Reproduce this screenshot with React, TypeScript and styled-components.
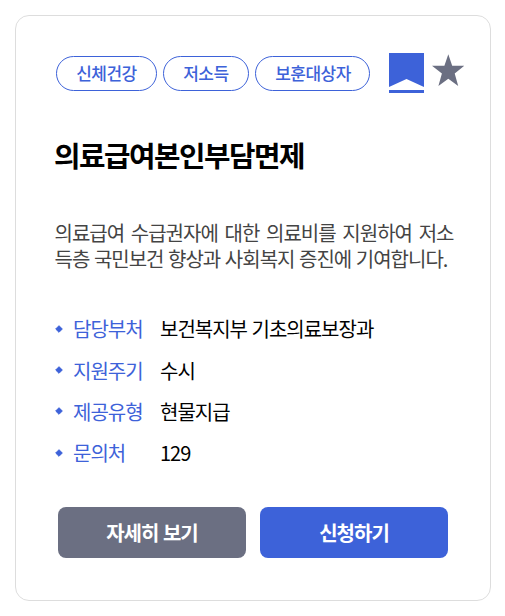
import React from "react";
import styled, { createGlobalStyle } from "styled-components";

const Global = createGlobalStyle`
  * { box-sizing: border-box; }
  body { margin: 0; background: #fff; font-family: "Noto Sans CJK KR", sans-serif; color: #000; }
`;
const Card = styled.article`
  width: 476px; height: 586px; margin: 15px 0 0 15px; padding: 37px 25px 0 39px;
  border: 1px solid #ddd; border-radius: 14px; background: #fff;
`;
const Header = styled.header`display: flex; height: 42px; align-items: flex-start;`;
const Tags = styled.div`display: flex; gap: 6px; padding: 3px 0 0 1px;`;
const Tag = styled.span<{ $w: number }>`
  width: ${p => p.$w}px; height: 35px; border: 1px solid #3d62d9; border-radius: 18px;
  padding: 0 0 2px 19.2px; display: flex; align-items: center;
  color: #3d62d9; font-size: 17px; font-weight: 500; letter-spacing: -0.5px; white-space: nowrap;
`;
const Icons = styled.div`display: flex; gap: 7px; margin-left: 19px;`;
const Title = styled.h1`margin: 39px 0 0 -1px; font-size: 28.8px; line-height: 42px; font-weight: 700; letter-spacing: -1.5px; white-space: nowrap;`;
const Description = styled.p`
  margin: 44px 0 0 -0.5px; width: 399px; color: #444; font-size: 20px; line-height: 26px;
  letter-spacing: -1px; word-spacing: 1.1px; text-align: justify; word-break: break-all;
`;
const Details = styled.dl`margin: 36px 0 0; display: grid; grid-auto-rows: 41.4px;`;
const Detail = styled.div`display: grid; grid-template-columns: 18px 87px 1fr; align-items: center; font-size: 20px; letter-spacing: -1px;`;
const Label = styled.dt`color: #3d62d9;`;
const Value = styled.dd`margin: 0; word-spacing: 1px;`;
const Actions = styled.div`display: flex; gap: 14px; margin: 33px 0 0 3px;`;
const Button = styled.button<{ $primary?: boolean }>`
  width: 188px; height: 51px; border: 0; border-radius: 8px; padding: 1px 0 0;
  background: ${p => (p.$primary ? "#3d62d9" : "#6b6f82")};
  color: #fff; font: 700 20px "Noto Sans CJK KR", sans-serif; letter-spacing: -1px; word-spacing: 1px;
`;
const tags = [{ text: "신체건강", w: 101 }, { text: "저소득", w: 86 }, { text: "보훈대상자", w: 115 }];
const details = [["담당부처", "보건복지부 기초의료보장과"], ["지원주기", "수시"], ["제공유형", "현물지급"], ["문의처", "129"]];

export default function App() {
  return (
    <>
      <Global />
      <Card>
        <Header>
          <Tags>{tags.map(t => <Tag key={t.text} $w={t.w}>{t.text}</Tag>)}</Tags>
          <Icons>
            <svg width="35" height="41" viewBox="0 0 35 41"><path fill="#3d62d9" d="M0 0h35v34L17.500 26 0 34zM0 37h35v3H0z" /></svg>
            <svg width="34" height="35" viewBox="0 0 34 35"><path fill="#6b6f82" d="M17.300 1.300L21.200 12.800H33.300L23.700 20.500L27.200 33L17.300 25.700L7.400 33L10.900 20.500L1 12.800H13.400z" /></svg>
          </Icons>
        </Header>
        <Title>의료급여본인부담면제</Title>
        <Description>의료급여 수급권자에 대한 의료비를 지원하여 저소득층 국민보건 향상과 사회복지 증진에 기여합니다.</Description>
        <Details>
          {details.map(([label, value]) => (
            <Detail key={label}>
              <svg width="8" height="8" viewBox="0 0 8 8"><path fill="#3d62d9" stroke="#3d62d9" strokeWidth="1" strokeLinejoin="round" d="M4 .7L7.300 4L4 7.300L.7 4z" /></svg>
              <Label>{label}</Label><Value>{value}</Value>
            </Detail>
          ))}
        </Details>
        <Actions><Button>자세히 보기</Button><Button $primary>신청하기</Button></Actions>
      </Card>
    </>
  );
}
